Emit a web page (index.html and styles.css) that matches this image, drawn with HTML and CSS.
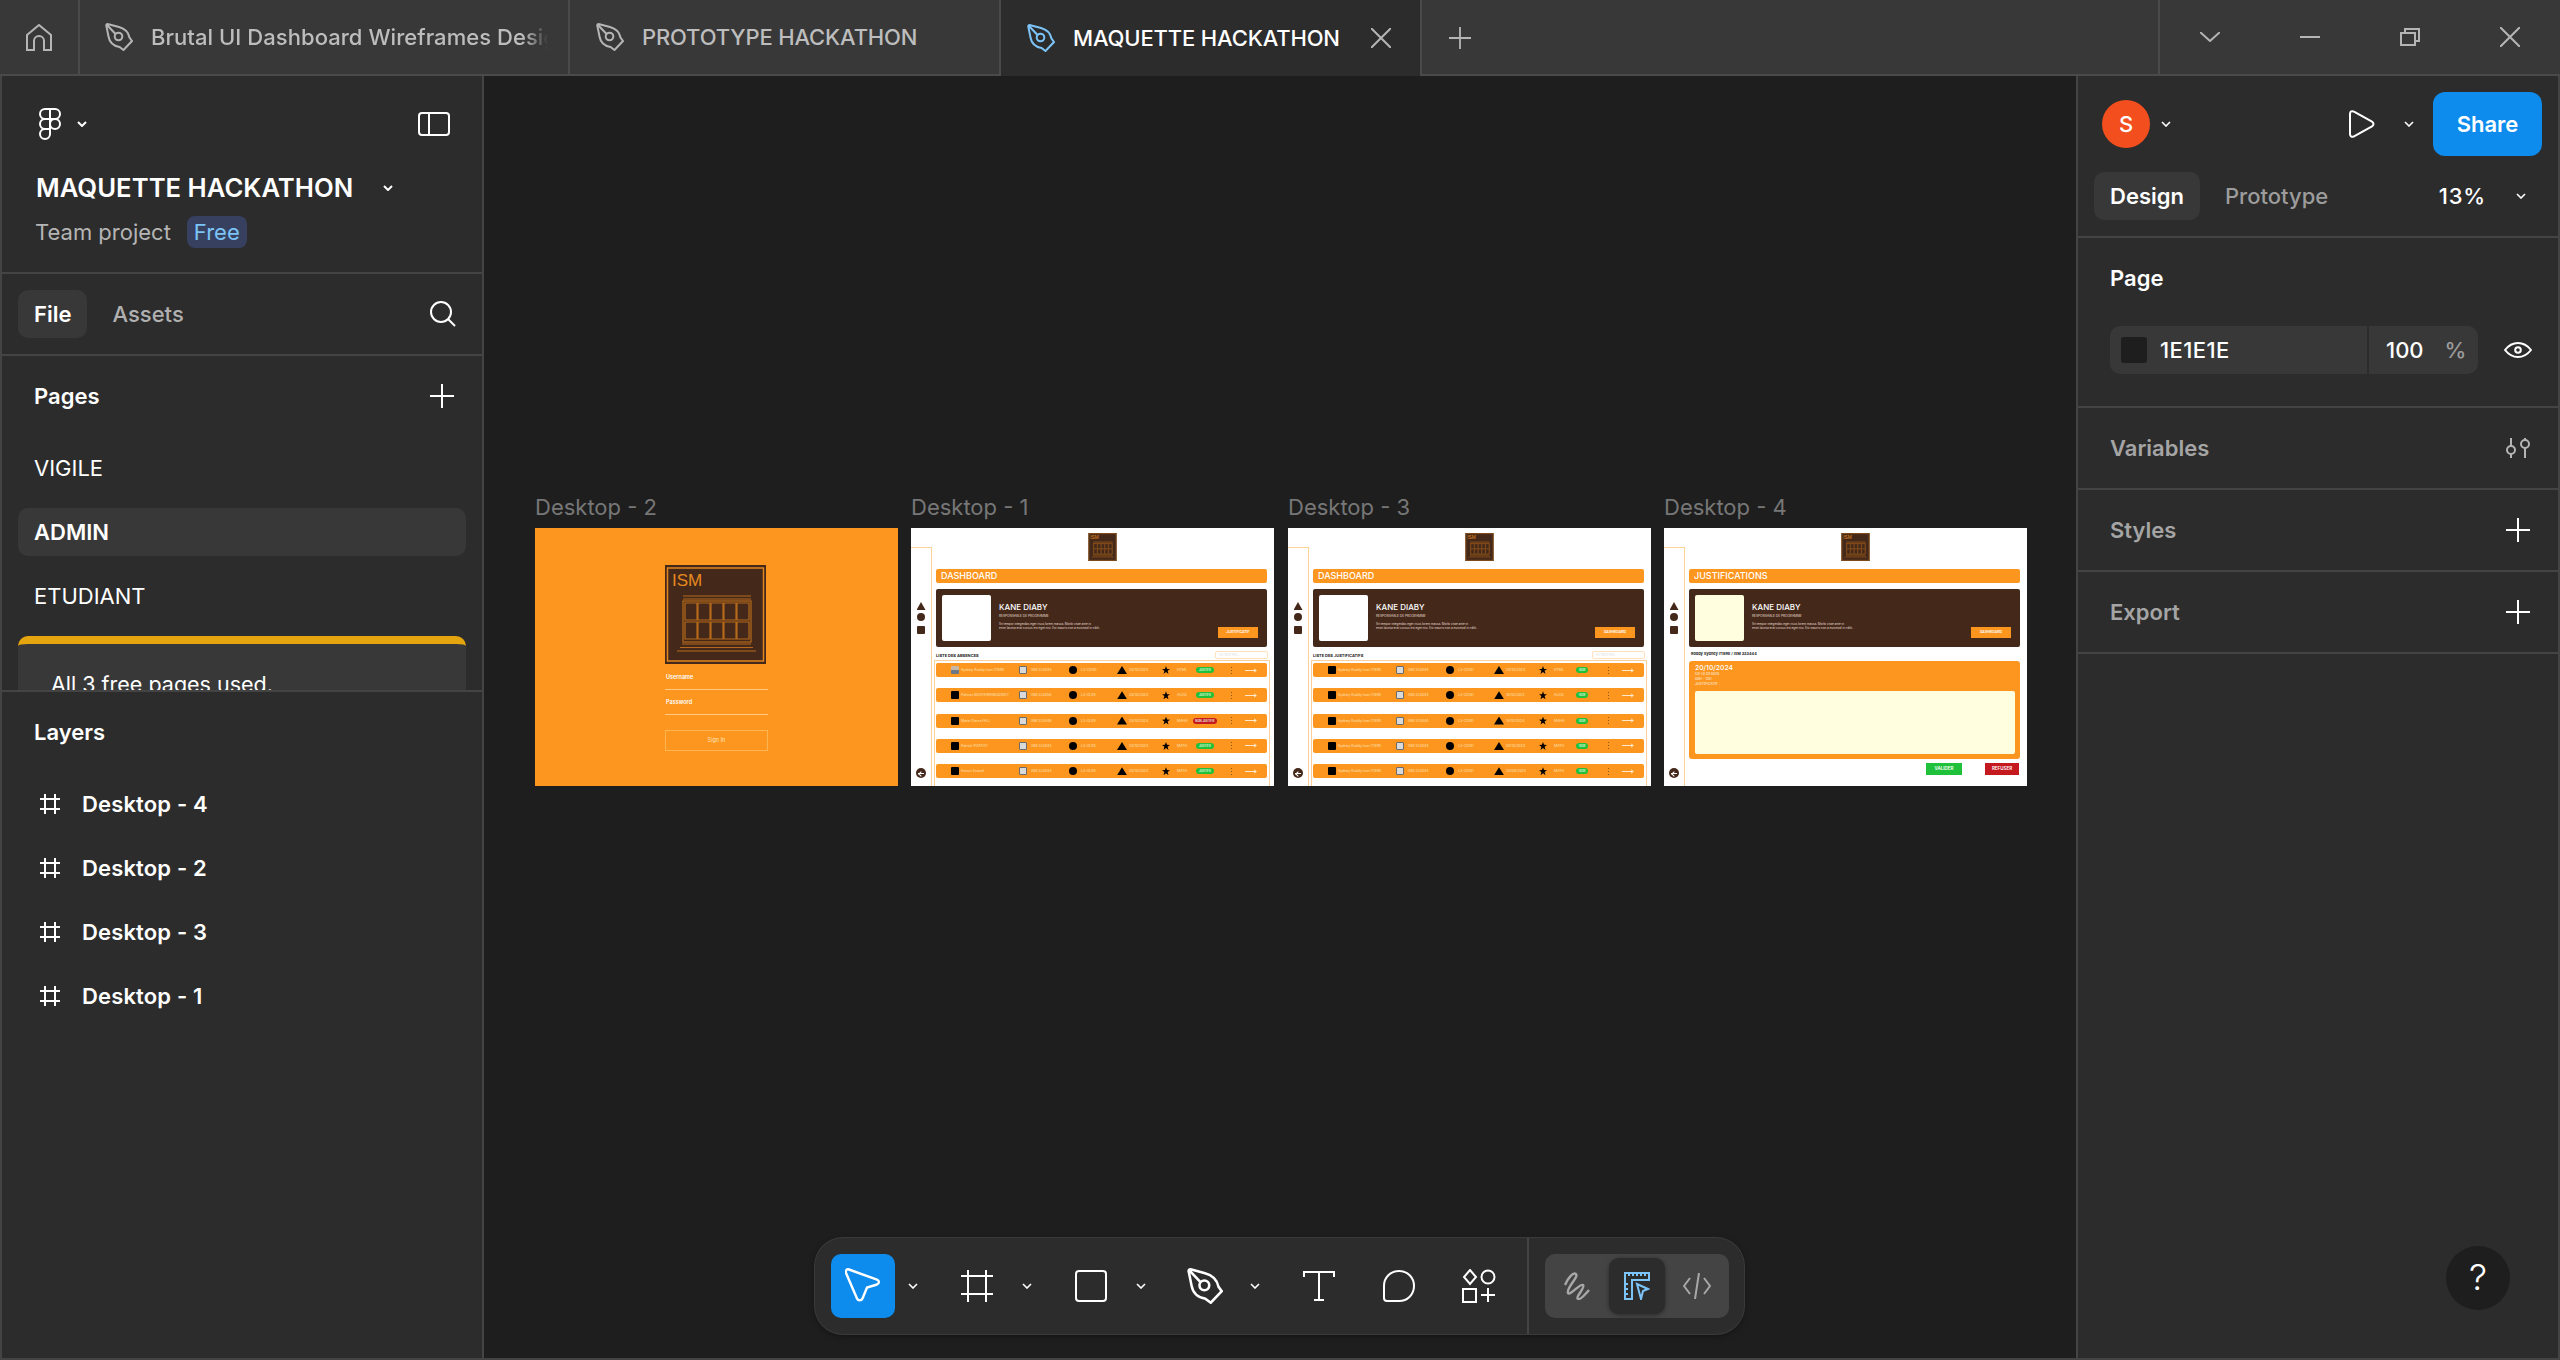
FILE: index.html
```html
<!DOCTYPE html>
<html>
<head>
  <title>MAQUETTE HACKATHON</title>
  <link rel="stylesheet" href="styles.css">
</head>
<body>
<svg class="sprites" width="0" height="0">
  <symbol id="pen" viewBox="0 0 28 28"><path d="M1.5 3.5C.8 1.5 1.7.7 3.5 1.2L14 4c6 1.6 9.5 5.500 10.500 10.500l2.500 3.500-8.500 9-4-3C9 23 4.500 19.500 3.500 13.500zM2 2l8.500 9"/><circle cx="13.500" cy="13.500" r="3.800"/></symbol>
  <symbol id="chev" viewBox="0 0 10 6"><path d="M1 1l4 4 4-4"/></symbol>
  <symbol id="plus" viewBox="0 0 24 24"><path d="M12 0v24M0 12h24"/></symbol>
  <symbol id="hash" viewBox="0 0 20 20"><path d="M5 0v20M15 0v20M0 5h20M0 15h20"/></symbol>
  <symbol id="logo" viewBox="0 0 101 99">
    <rect width="101" height="99" fill="#44291b"/>
    <rect x="2.500" y="3" width="96" height="93" fill="none" stroke="#e0851e" stroke-width="1.500"/>
    <text x="7" y="21" font-family="Liberation Sans" font-size="17" fill="#e8891e">ISM</text>
    <g fill="none" stroke="#b5691a" stroke-width="1.200">
      <path d="M18 31h68M18 34h68"/>
      <rect x="18" y="36" width="68" height="41"/>
      <path d="M20 38h12v17H20zM33 38h12v17H33zM46 38h12v17H46zM59 38h12v17H59zM72 38h12v17H72zM20 57h12v17H20zM33 57h12v17H33zM46 57h12v17H46zM59 57h12v17H59zM72 57h12v17H72z"/>
      <path d="M17 79h69M15 82.500h73M12 86h79"/>
    </g>
  </symbol>
</svg>

<div class="tabbar">
  <div class="tab-home">
    <svg class="ic stroke-gray" width="26" height="28" viewBox="0 0 26 28"><path d="M1 26V11L13 1l12 10v15h-7v-9a5 5 0 0 0-10 0v9z"/></svg>
  </div>
  <div class="tab tab-first">
    <svg class="ic stroke-gray" width="28" height="28"><use href="#pen"/></svg>
    <span class="tab-name fade">Brutal UI Dashboard Wireframes Design</span>
  </div>
  <div class="tab tab-second">
    <svg class="ic stroke-gray" width="28" height="28"><use href="#pen"/></svg>
    <span class="tab-name">PROTOTYPE HACKATHON</span>
  </div>
  <div class="tab tab-active">
    <svg class="ic stroke-blue" width="28" height="28"><use href="#pen"/></svg>
    <span class="tab-name">MAQUETTE HACKATHON</span>
    <svg class="ic stroke-gray tab-close" width="20" height="20" viewBox="0 0 20 20"><path d="M0 0l20 20M20 0L0 20"/></svg>
  </div>
  <div class="tab-add">
    <svg class="ic stroke-gray" width="22" height="22"><use href="#plus"/></svg>
  </div>
  <div class="win-btns">
    <div class="win-btn"><svg class="ic stroke-gray" width="20" height="10" viewBox="0 0 20 10"><path d="M0 0l10 9 10-9"/></svg></div>
    <div class="win-btn"><svg class="ic stroke-gray" width="20" height="2" viewBox="0 0 20 2"><path d="M0 1h20"/></svg></div>
    <div class="win-btn"><svg class="ic stroke-gray" width="20" height="18" viewBox="0 0 20 18"><path d="M1 5h14v12H1zM5 5V1h14v12h-4"/></svg></div>
    <div class="win-btn"><svg class="ic stroke-gray" width="20" height="20" viewBox="0 0 20 20"><path d="M0 0l20 20M20 0L0 20"/></svg></div>
  </div>
</div>

<div class="main">
  <div class="left-panel">
    <div class="file-head">
      <div class="file-tools">
        <svg class="ic stroke-white" width="24" height="32" viewBox="0 0 24 32"><path d="M12 1H7a5 5 0 0 0 0 10h5zM12 1h5a5 5 0 0 1 0 10h-5zM12 11H7a5 5 0 0 0 0 10h5zM12 21H7a5 5 0 1 0 5 5z"/><circle cx="17" cy="16" r="5"/></svg>
        <svg class="ic stroke-white chev logo-chev" width="10" height="6"><use href="#chev"/></svg>
        <svg class="ic stroke-white side-toggle" width="32" height="24" viewBox="0 0 32 24"><rect x="1" y="1" width="30" height="22" rx="3"/><path d="M11 1v22"/></svg>
      </div>
      <div class="file-title">
        <span>MAQUETTE HACKATHON</span>
        <svg class="ic stroke-white chev title-chev" width="10" height="6"><use href="#chev"/></svg>
      </div>
      <div class="file-sub">
        <span>Team project</span>
        <span class="free-pill">Free</span>
      </div>
    </div>

    <div class="file-tabs">
      <span class="pill-tab">File</span>
      <span class="plain-tab">Assets</span>
      <svg class="ic stroke-white search" width="26" height="26" viewBox="0 0 26 26"><circle cx="11" cy="11" r="10"/><path d="M18 18l7 7"/></svg>
    </div>

    <div class="pages">
      <div class="pages-head">
        <span>Pages</span>
        <svg class="ic stroke-white" width="24" height="24"><use href="#plus"/></svg>
      </div>
      <div class="page-row">VIGILE</div>
      <div class="page-row page-on">ADMIN</div>
      <div class="page-row">ETUDIANT</div>
      <div class="limit-note">All 3 free pages used.</div>
    </div>

    <div class="layers">
      <div class="layers-head">Layers</div>
      <div class="layer"><svg class="ic stroke-white" width="20" height="20"><use href="#hash"/></svg><span>Desktop - 4</span></div>
      <div class="layer"><svg class="ic stroke-white" width="20" height="20"><use href="#hash"/></svg><span>Desktop - 2</span></div>
      <div class="layer"><svg class="ic stroke-white" width="20" height="20"><use href="#hash"/></svg><span>Desktop - 3</span></div>
      <div class="layer"><svg class="ic stroke-white" width="20" height="20"><use href="#hash"/></svg><span>Desktop - 1</span></div>
    </div>
  </div>

  <div class="canvas">
    <!-- Desktop - 2 -->
    <div class="board board-d2">
      <div class="board-label">Desktop - 2</div>
      <div class="frame frame-login">
        <svg class="login-logo"><use href="#logo"/></svg>
        <div class="login-field">Username</div>
        <div class="login-field login-field-2">Password</div>
        <div class="login-btn">Sign In</div>
      </div>
    </div>

    <!-- Desktop - 1 -->
    <div class="board board-d1">
      <div class="board-label">Desktop - 1</div>
      <div class="frame">
        <div class="mini-side">
          <span class="mi-tri"></span><span class="mi-dot"></span><span class="mi-sq"></span>
          <span class="mi-back"></span>
        </div>
        <div class="mini-main">
          <svg class="mini-logo"><use href="#logo"/></svg>
          <div class="mini-title">DASHBOARD</div>
          <div class="mini-card">
            <div class="mini-photo"></div>
            <div class="mini-info">
              <div class="mini-name">KANE DIABY</div>
              <div class="mini-role">RESPONSABLE DE PROGRAMME</div>
              <div class="mini-text">Sit tempor integerdas eget risus lorem massa. Morbi vitae ante in<br>enim lacinia erat cursus est eget nisi. Est mauris non a euismod in nibh.</div>
            </div>
            <div class="mini-action">JUSTIFICATIF</div>
          </div>
          <div class="mini-listhead"><span>LISTE DES ABSENCES</span><span class="mini-filter">FILTRER PAR...</span></div>
          <div class="mini-list">
            <div class="mrow"><i class="m-ava m-photo"></i><b>Sydney Ruddy Ivan ITIERE</b><i class="m-sq"></i><b>ISM 333444</b><i class="m-dot"></i><b>L3-CDSD</b><i class="m-tri"></i><b>20/10/2024</b><i class="m-star"></i><b>HTML</b><em class="m-badge">JUSTIFIE</em><u class="m-more"></u><s class="m-arrow"></s></div>
            <div class="mrow"><i class="m-ava"></i><b>Paknas NGAYEWANKODIEET</b><i class="m-sq"></i><b>ISM 333456</b><i class="m-dot"></i><b>L3-GLRS</b><i class="m-tri"></i><b>20/10/2024</b><i class="m-star"></i><b>ALGO</b><em class="m-badge">JUSTIFIE</em><u class="m-more"></u><s class="m-arrow"></s></div>
            <div class="mrow"><i class="m-ava"></i><b>Marie Diarra FALL</b><i class="m-sq"></i><b>ISM 333449</b><i class="m-dot"></i><b>L3-GLRS</b><i class="m-tri"></i><b>20/10/2024</b><i class="m-star"></i><b>MAHA</b><em class="m-badge m-badge-no">NON JUSTIFIE</em><u class="m-more"></u><s class="m-arrow"></s></div>
            <div class="mrow"><i class="m-ava"></i><b>Patrick PGATHY</b><i class="m-sq"></i><b>ISM 333444</b><i class="m-dot"></i><b>L3-GLRS</b><i class="m-tri"></i><b>20/10/2024</b><i class="m-star"></i><b>MATH</b><em class="m-badge">JUSTIFIE</em><u class="m-more"></u><s class="m-arrow"></s></div>
            <div class="mrow"><i class="m-ava"></i><b>Amour Evaroil</b><i class="m-sq"></i><b>ISM 333444</b><i class="m-dot"></i><b>L3-GLRS</b><i class="m-tri"></i><b>20/10/2024</b><i class="m-star"></i><b>MATH</b><em class="m-badge">JUSTIFIE</em><u class="m-more"></u><s class="m-arrow"></s></div>
          </div>
        </div>
      </div>
    </div>

    <!-- Desktop - 3 -->
    <div class="board board-d3">
      <div class="board-label">Desktop - 3</div>
      <div class="frame">
        <div class="mini-side">
          <span class="mi-tri"></span><span class="mi-dot"></span><span class="mi-sq"></span>
          <span class="mi-back"></span>
        </div>
        <div class="mini-main">
          <svg class="mini-logo"><use href="#logo"/></svg>
          <div class="mini-title">DASHBOARD</div>
          <div class="mini-card">
            <div class="mini-photo"></div>
            <div class="mini-info">
              <div class="mini-name">KANE DIABY</div>
              <div class="mini-role">RESPONSABLE DE PROGRAMME</div>
              <div class="mini-text">Sit tempor integerdas eget risus lorem massa. Morbi vitae ante in<br>enim lacinia erat cursus est eget nisi. Est mauris non a euismod in nibh.</div>
            </div>
            <div class="mini-action">DASHBOARD</div>
          </div>
          <div class="mini-listhead"><span>LISTE DES JUSTIFICATIFS</span><span class="mini-filter">FILTRER PAR...</span></div>
          <div class="mini-list">
            <div class="mrow"><i class="m-ava"></i><b>Sydney Ruddy Ivan ITIERE</b><i class="m-sq"></i><b>ISM 333444</b><i class="m-dot"></i><b>L3-CDSD</b><i class="m-tri"></i><b>20/10/2024</b><i class="m-star"></i><b>HTML</b><em class="m-badge m-badge-see">VOIR</em><u class="m-more"></u><s class="m-arrow"></s></div>
            <div class="mrow"><i class="m-ava"></i><b>Sydney Ruddy Ivan ITIERE</b><i class="m-sq"></i><b>ISM 333444</b><i class="m-dot"></i><b>L3-CDSD</b><i class="m-tri"></i><b>18/10/2024</b><i class="m-star"></i><b>ALGO</b><em class="m-badge m-badge-see">VOIR</em><u class="m-more"></u><s class="m-arrow"></s></div>
            <div class="mrow"><i class="m-ava"></i><b>Sydney Ruddy Ivan ITIERE</b><i class="m-sq"></i><b>ISM 333444</b><i class="m-dot"></i><b>L3-CDSD</b><i class="m-tri"></i><b>15/10/2024</b><i class="m-star"></i><b>MAHA</b><em class="m-badge m-badge-see">VOIR</em><u class="m-more"></u><s class="m-arrow"></s></div>
            <div class="mrow"><i class="m-ava"></i><b>Sydney Ruddy Ivan ITIERE</b><i class="m-sq"></i><b>ISM 333444</b><i class="m-dot"></i><b>L3-CDSD</b><i class="m-tri"></i><b>05/10/2024</b><i class="m-star"></i><b>MATH</b><em class="m-badge m-badge-see">VOIR</em><u class="m-more"></u><s class="m-arrow"></s></div>
            <div class="mrow"><i class="m-ava"></i><b>Sydney Ruddy Ivan ITIERE</b><i class="m-sq"></i><b>ISM 333444</b><i class="m-dot"></i><b>L3-CDSD</b><i class="m-tri"></i><b>20/09/2024</b><i class="m-star"></i><b>MATH</b><em class="m-badge m-badge-see">VOIR</em><u class="m-more"></u><s class="m-arrow"></s></div>
          </div>
        </div>
      </div>
    </div>

    <!-- Desktop - 4 -->
    <div class="board board-d4">
      <div class="board-label">Desktop - 4</div>
      <div class="frame">
        <div class="mini-side">
          <span class="mi-tri"></span><span class="mi-dot"></span><span class="mi-sq"></span>
          <span class="mi-back"></span>
        </div>
        <div class="mini-main">
          <svg class="mini-logo"><use href="#logo"/></svg>
          <div class="mini-title">JUSTIFICATIONS</div>
          <div class="mini-card">
            <div class="mini-photo mini-photo-pale"></div>
            <div class="mini-info">
              <div class="mini-name">KANE DIABY</div>
              <div class="mini-role">RESPONSABLE DE PROGRAMME</div>
              <div class="mini-text">Sit tempor integerdas eget risus lorem massa. Morbi vitae ante in<br>enim lacinia erat cursus est eget nisi. Est mauris non a euismod in nibh.</div>
            </div>
            <div class="mini-action">DASHBOARD</div>
          </div>
          <div class="just-who">Roddy Sydney ITIERE / ISM 333444</div>
          <div class="just-box">
            <div class="just-date">20/10/2024</div>
            <div class="just-line">UX-UI DESIGN</div>
            <div class="just-line">08H - 12H</div>
            <div class="just-line">JUSTIFICATIF :</div>
            <div class="just-area"></div>
          </div>
          <div class="just-btns">
            <span class="just-btn just-ok">VALIDER</span>
            <span class="just-btn just-no">REFUSER</span>
          </div>
        </div>
      </div>
    </div>

    <div class="toolbar">
      <div class="tool tool-on"><svg class="ic stroke-white sw3" width="36" height="36" viewBox="0 0 36 36"><path d="M4 1.500l28 10c2.500 1 2.500 4 0 5l-10 3-4.500 11c-1 2.500-4.500 2.500-5.500 0L1 5C0.300 2.500 1.800.800 4 1.500z"/></svg></div>
      <div class="tool-chev"><svg class="ic stroke-white chev sw2" width="10" height="6"><use href="#chev"/></svg></div>
      <div class="tool tool-gap"><svg class="ic stroke-white" width="32" height="32" viewBox="0 0 32 32"><path d="M7 0v32M25 0v32M0 6h32M0 24h32"/></svg></div>
      <div class="tool-chev"><svg class="ic stroke-white chev sw2" width="10" height="6"><use href="#chev"/></svg></div>
      <div class="tool tool-gap"><svg class="ic stroke-white" width="32" height="32" viewBox="0 0 32 32"><rect x="1" y="1" width="30" height="30" rx="3"/></svg></div>
      <div class="tool-chev"><svg class="ic stroke-white chev sw2" width="10" height="6"><use href="#chev"/></svg></div>
      <div class="tool tool-gap"><svg class="ic stroke-white" width="36" height="36"><use href="#pen"/></svg></div>
      <div class="tool-chev"><svg class="ic stroke-white chev sw2" width="10" height="6"><use href="#chev"/></svg></div>
      <div class="tool tool-gap"><svg class="ic stroke-white" width="32" height="30" viewBox="0 0 32 30"><path d="M1 6V1h30v5M16 1v28M11 29h10"/></svg></div>
      <div class="tool tool-gap2"><svg class="ic stroke-white" width="32" height="32" viewBox="0 0 32 32"><path d="M16 1c8.500 0 15 6.500 15 15s-6.500 15-15 15H4c-2 0-3-1-3-3V16C1 7.500 7.500 1 16 1z"/></svg></div>
      <div class="tool tool-gap2"><svg class="ic stroke-white" width="34" height="34" viewBox="0 0 34 34"><path d="M8 1l6 7-6 7-6-7zM1 20h13v13H1zM26 19v14M19 26h14"/><circle cx="26" cy="8" r="6.500"/></svg></div>
      <div class="tool-divider"></div>
      <div class="modes">
        <div class="mode"><svg class="ic stroke-mode sw3" width="28" height="28" viewBox="0 0 28 28"><path d="M2 13C5 6 10 0 13 2c3 3-10 14-8 19 2 3 12-10 15-8 3 2-8 12-5 14 2 1 6-3 11-9"/></svg></div>
        <div class="mode mode-on"><svg class="ic stroke-blue" width="26" height="28" viewBox="0 0 26 28"><path d="M1 1h24v7H8v19H1zM5 1v3M9 1v3M13 1v3M17 1v3M21 1v3M1 12h3M1 17h3M1 22h3"/><path d="M13 12l11 5-5 2-2 8z"/></svg></div>
        <div class="mode"><svg class="ic stroke-mode" width="28" height="26" viewBox="0 0 28 26"><path d="M7 5l-6 8 6 8M21 5l6 8-6 8M16 0l-4 26"/></svg></div>
      </div>
    </div>
  </div>

  <div class="right-panel">
    <div class="rp-top">
      <span class="avatar">S</span>
      <svg class="ic stroke-white chev sw2 avatar-chev" width="10" height="6"><use href="#chev"/></svg>
      <svg class="ic stroke-white play" width="26" height="28" viewBox="0 0 26 28"><path d="M1 4c0-2.500 2-3.500 4-2.300l18 10c2 1.200 2 3.400 0 4.600l-18 10C3 27.500 1 26.500 1 24z"/></svg>
      <svg class="ic stroke-white chev sw2 play-chev" width="10" height="6"><use href="#chev"/></svg>
      <span class="share">Share</span>
    </div>
    <div class="rp-tabs">
      <span class="design-tab">Design</span>
      <span class="proto-tab">Prototype</span>
      <span class="zoom-val">13%</span>
      <svg class="ic stroke-white chev sw2 zoom-chev" width="10" height="6"><use href="#chev"/></svg>
    </div>
    <div class="rp-page">
      <div class="rp-title">Page</div>
      <div class="rp-field-row">
        <div class="rp-field">
          <span class="swatch"></span>
          <span class="hex">1E1E1E</span>
          <span class="opacity">100</span>
          <span class="percent">%</span>
        </div>
        <svg class="ic stroke-white eye" width="28" height="16" viewBox="0 0 28 16"><path d="M1 8c3.500-4.500 8-7 13-7s9.500 2.500 13 7c-3.500 4.500-8 7-13 7S4.500 12.500 1 8z"/><circle cx="14" cy="8" r="2.800"/></svg>
      </div>
    </div>
    <div class="rp-section">
      <span>Variables</span>
      <svg class="ic stroke-gray" width="24" height="20" viewBox="0 0 24 20"><circle cx="5" cy="12" r="4"/><circle cx="19" cy="6" r="4"/><path d="M5 0v8M5 16v4M19 0v2M19 10v10"/></svg>
    </div>
    <div class="rp-section">
      <span>Styles</span>
      <svg class="ic stroke-white" width="24" height="24"><use href="#plus"/></svg>
    </div>
    <div class="rp-section">
      <span>Export</span>
      <svg class="ic stroke-white" width="24" height="24"><use href="#plus"/></svg>
    </div>
    <div class="help">?</div>
  </div>
</div>
</body>
</html>
```

FILE: styles.css
```css
* {
  box-sizing: border-box;
}
body {
  margin: 0;
  width: 2560px;
  height: 1360px;
  overflow: hidden;
  background: #1e1e1e;
  font-family: Inter, "Noto Sans", sans-serif;
  font-size: 22px;
  color: #fff;
}
.sprites {
  position: absolute;
}
.ic {
  fill: none;
  stroke-width: 2;
  flex-shrink: 0;
  display: block;
}
.stroke-white { stroke: #fff; }
.stroke-gray { stroke: #b5b5b5; }
.stroke-blue { stroke: #7cc4f8; }
.stroke-mode { stroke: #a8a8a8; }
.sw2 { stroke-width: 1.6; }
.sw3 { stroke-width: 2.4; }

/* tab bar */
.tabbar {
  display: flex;
  height: 76px;
  background: #383838;
  border-bottom: 2px solid #4a4a4a;
}
.tab-home {
  width: 80px;
  border-right: 2px solid #4a4a4a;
  padding: 24px 0 0 26px;
}
.tab {
  display: flex;
  align-items: center;
  padding-left: 25px;
  border-right: 2px solid #4a4a4a;
  color: #bdbdbd;
  font-weight: 500;
  gap: 18px;
  white-space: nowrap;
  overflow: hidden;
}
.tab-first { width: 490px; }
.tab-second { width: 431px; padding-left: 26px; }
.tab-active {
  width: 421px;
  padding-left: 26px;
  height: 76px;
  background: #2c2c2c;
  color: #fff;
}
.tab-name {
  display: block;
  letter-spacing: -.15px;
}
.fade {
  width: 397px;
  overflow: hidden;
  letter-spacing: .05px;
  -webkit-mask-image: linear-gradient(to right, #000 94%, transparent);
}
.tab-close {
  margin-left: 13px;
}
.tab-add {
  padding: 27px 0 0 27px;
  flex: 1;
}
.win-btns {
  display: flex;
  width: 402px;
  border-left: 2px solid #4a4a4a;
}
.win-btn {
  width: 100px;
  height: 74px;
  display: flex;
  align-items: center;
  justify-content: center;
}

/* layout */
.main {
  display: flex;
  height: 1284px;
  border-left: 2px solid #444;
  border-right: 2px solid #444;
  border-bottom: 2px solid #444;
}
.left-panel {
  width: 482px;
  background: #2c2c2c;
  border-right: 2px solid #444;
  display: flex;
  flex-direction: column;
}
.canvas {
  width: 1592px;
  position: relative;
  background: #1e1e1e;
}
.right-panel {
  width: 482px;
  background: #2c2c2c;
  border-left: 2px solid #444;
  position: relative;
}

/* left panel */
.file-head {
  height: 198px;
  padding: 32px 32px 0 34px;
  border-bottom: 2px solid #444;
}
.file-tools {
  display: flex;
  align-items: center;
  margin-left: 2px;
}
.logo-chev {
  margin-left: 15px;
}
.side-toggle {
  margin-left: auto;
}
.file-title {
  display: flex;
  align-items: center;
  margin-top: 32px;
  font-size: 25.700px;
  font-weight: 600;
}
.title-chev {
  margin-left: 30px;
}
.file-sub {
  display: flex;
  align-items: center;
  margin-top: 13px;
  margin-left: -1px;
  color: #b5b5b5;
}
.free-pill {
  margin-left: 16px;
  padding: 0 7px;
  height: 32px;
  line-height: 32px;
  border-radius: 8px;
  background: #37415f;
  color: #7cc4f8;
}
.file-tabs {
  height: 82px;
  display: flex;
  align-items: center;
  padding: 0 26px 0 16px;
  border-bottom: 2px solid #444;
}
.pill-tab {
  padding: 0 16px;
  height: 48px;
  line-height: 48px;
  border-radius: 10px;
  background: #383838;
  font-weight: 600;
}
.plain-tab {
  margin-left: 25px;
  color: #b0b0b0;
  font-weight: 500;
}
.search {
  margin-left: auto;
}
.pages {
  height: 336px;
  padding: 0 16px;
  border-bottom: 2px solid #444;
  overflow: hidden;
}
.pages-head {
  display: flex;
  align-items: center;
  justify-content: space-between;
  height: 79px;
  padding: 0 12px 0 16px;
  font-weight: 600;
}
.page-row {
  height: 48px;
  line-height: 48px;
  margin: 9px 0 16px;
  padding-left: 16px;
  border-radius: 10px;
}
.page-row + .page-row {
  margin-top: 0;
}
.page-on {
  background: #383838;
  font-weight: 600;
}
.limit-note {
  height: 80px;
  padding: 27px 0 0 33px;
  background: #383838;
  border-top: 8px solid #e5a50f;
  border-radius: 10px 10px 0 0;
  font-size: 21.500px;
}
.layers-head {
  height: 80px;
  line-height: 80px;
  padding-left: 32px;
  font-weight: 600;
}
.layer {
  display: flex;
  align-items: center;
  height: 64px;
  padding-left: 38px;
  gap: 22px;
  font-weight: 600;
  letter-spacing: .15px;
}

/* boards on the canvas */
.board {
  position: absolute;
  top: 416px;
  width: 363px;
}
.board-d2 { left: 51px; }
.board-d1 { left: 427px; }
.board-d3 { left: 804px; }
.board-d4 { left: 1180px; }
.board-label {
  height: 30px;
  line-height: 30px;
  margin-bottom: 6px;
  color: #777;
}
.frame {
  display: flex;
  height: 258px;
  overflow: hidden;
  background: #fff;
}
.frame-login {
  flex-direction: column;
  align-items: center;
  padding: 37px 0 0 0;
  background: #fc961f;
}
.login-logo {
  width: 101px;
  height: 99px;
  margin-left: -3px;
}
.login-field {
  width: 103px;
  height: 24px;
  margin-top: 2px;
  padding: 8px 0 0 1px;
  font-size: 5.500px;
  font-weight: 600;
  border-bottom: 1px solid #ffc983;
}
.login-field-2 {
  margin-top: 1px;
}
.login-btn {
  width: 103px;
  height: 21px;
  margin-top: 15px;
  border: 1px solid #ffb552;
  text-align: center;
  line-height: 19px;
  font-size: 5.500px;
  color: #ffe3bd;
}

.mini-side {
  width: 21px;
  height: 239px;
  margin-top: 19px;
  flex-shrink: 0;
  display: flex;
  flex-direction: column;
  align-items: center;
  padding: 54px 0 0;
  border-top: 1px solid #fdd09a;
  border-right: 1px solid #fdd09a;
}
.mi-tri {
  width: 9px;
  height: 8px;
  background: #44291b;
  clip-path: polygon(50% 0, 100% 100%, 0 100%);
}
.mi-dot {
  width: 8px;
  height: 8px;
  margin-top: 3px;
  border-radius: 50%;
  background: #44291b;
}
.mi-sq {
  width: 8px;
  height: 8px;
  margin-top: 5px;
  border-radius: 1px;
  background: #44291b;
}
.mi-back {
  position: relative;
  width: 10px;
  height: 10px;
  margin-top: 134px;
  border-radius: 50%;
  background: #44291b;
}
.mi-back::after {
  content: "";
  position: absolute;
  left: 2px;
  top: 4.500px;
  width: 6px;
  height: 1px;
  background: #fff;
}
.mi-back::before {
  content: "";
  position: absolute;
  left: 2.500px;
  top: 3.500px;
  width: 3px;
  height: 3px;
  border-left: 1px solid #fff;
  border-bottom: 1px solid #fff;
  transform: rotate(45deg);
}
.mini-main {
  flex: 1;
  min-width: 0;
  padding: 5px 7px 0 4px;
  display: flex;
  flex-direction: column;
}
.mini-logo {
  width: 29px;
  height: 28px;
  margin-left: 152px;
  flex-shrink: 0;
}
.mini-title {
  height: 14px;
  line-height: 14px;
  margin-top: 8px;
  padding-left: 5px;
  background: #fc961f;
  border-radius: 2px;
  font-size: 9px;
  font-weight: 500;
  flex-shrink: 0;
}
.mini-card {
  display: flex;
  height: 58px;
  margin-top: 6px;
  padding: 6px 9px 0 6px;
  background: #44291b;
  border-radius: 2px;
  flex-shrink: 0;
}
.mini-photo {
  width: 49px;
  height: 46px;
  background: #fff;
  border-radius: 2px;
}
.mini-photo-pale {
  background: #ffffdf;
}
.mini-info {
  margin-left: 8px;
  padding-top: 8px;
  flex: 1;
}
.mini-name {
  font-size: 8px;
  font-weight: 500;
  line-height: 9px;
}
.mini-role {
  margin-top: 2px;
  font-size: 3.200px;
  line-height: 5px;
  color: #e8dcd2;
}
.mini-text {
  margin-top: 3px;
  font-size: 3px;
  line-height: 4px;
  color: #e8dcd2;
}
.mini-action {
  width: 40px;
  height: 11px;
  margin-top: 32px;
  line-height: 11px;
  background: #fc961f;
  font-size: 3.500px;
  font-weight: 600;
  text-align: center;
}
.mini-listhead {
  display: flex;
  align-items: center;
  justify-content: space-between;
  height: 8px;
  margin: 4px -1px 0 0;
  color: #222;
  font-size: 4px;
  font-weight: 700;
  flex-shrink: 0;
}
.mini-filter {
  width: 53px;
  height: 8px;
  line-height: 7px;
  padding-left: 3px;
  border: 1px solid #ffe1bc;
  border-radius: 2px;
  font-size: 3px;
  font-weight: 400;
  color: #ddd;
}
.mini-list {
  display: flex;
  flex-direction: column;
  gap: 11.300px;
  height: 130px;
  margin: 1px -3px 0 -2px;
  padding: 2px 2px 0 1px;
  border: 1px solid #fdd09a;
  flex-shrink: 0;
}
.mrow {
  display: grid;
  grid-template-columns: 10px 58px 12px 38px 12px 36px 12px 33px 15px 15px 26px 27px 12px;
  align-items: center;
  height: 14px;
  padding-left: 15px;
  background: #fc961f;
  border-radius: 2px;
  flex-shrink: 0;
  overflow: hidden;
}
.mrow b {
  font-size: 3.500px;
  font-weight: 400;
  color: #ffe3bd;
  white-space: nowrap;
}
.m-ava {
  display: block;
  width: 8px;
  height: 8px;
  background: #000;
  border-radius: 1px;
}
.m-photo {
  background: linear-gradient(#c8b6a6 45%, #6d7885 45%);
}
.m-sq {
  display: block;
  width: 8px;
  height: 8px;
  background: #d9d9d9;
  border: 1px solid #6b6b6b;
  border-radius: 1px;
}
.m-dot {
  display: block;
  width: 8px;
  height: 8px;
  border-radius: 50%;
  background: #000;
}
.m-tri {
  display: block;
  width: 10px;
  height: 8px;
  background: #000;
  clip-path: polygon(50% 0, 100% 100%, 0 100%);
}
.m-star {
  display: block;
  width: 8px;
  height: 8px;
  background: #000;
  clip-path: polygon(50% 0, 63% 36%, 100% 38%, 70% 60%, 81% 100%, 50% 76%, 19% 100%, 30% 60%, 0 38%, 37% 36%);
}
.m-badge {
  justify-self: center;
  height: 6px;
  line-height: 6px;
  padding: 0 3px;
  border-radius: 3px;
  background: #1fc13a;
  color: #eafbe9;
  font-size: 2.800px;
  font-style: normal;
  font-weight: 600;
  white-space: nowrap;
}
.m-badge-no {
  background: #c4191f;
  padding: 0 2px;
}
.m-badge-see {
  padding: 0 3px;
}
.m-more {
  display: block;
  justify-self: center;
  width: 1px;
  height: 7px;
  background: repeating-linear-gradient(#8a5a20 0 1px, transparent 1px 3px);
}
.m-arrow {
  display: block;
  position: relative;
  width: 11px;
  height: 1px;
  background: #ffe9cc;
}
.m-arrow::after {
  content: "";
  position: absolute;
  right: 0;
  top: -1px;
  width: 2px;
  height: 2px;
  border-top: 1px solid #ffe9cc;
  border-right: 1px solid #ffe9cc;
  transform: rotate(45deg);
}

/* desktop 4 */
.just-who {
  margin: 3px 0 0 2px;
  height: 8px;
  line-height: 8px;
  color: #222;
  font-size: 3.800px;
  font-weight: 700;
  flex-shrink: 0;
}
.just-box {
  height: 98px;
  margin-top: 3px;
  padding: 2px 5px 0 6px;
  background: #fc961f;
  border-radius: 3px;
  flex-shrink: 0;
}
.just-date {
  font-size: 6.800px;
  line-height: 9px;
  font-weight: 500;
}
.just-line {
  font-size: 3.500px;
  line-height: 5px;
  color: #fff4e3;
}
.just-area {
  height: 63px;
  margin-top: 4px;
  background: #ffffdf;
  border-radius: 2px;
}
.just-btns {
  display: flex;
  justify-content: flex-end;
  gap: 23px;
  margin: 4px 1px 0 0;
}
.just-btn {
  height: 12px;
  line-height: 12px;
  text-align: center;
  font-size: 4.500px;
  font-weight: 600;
}
.just-ok {
  width: 36px;
  background: #1fc13a;
}
.just-no {
  width: 34px;
  background: #c4191f;
}

/* bottom toolbar */
.toolbar {
  position: absolute;
  left: 331px;
  top: 1162px;
  width: 929px;
  height: 96px;
  display: flex;
  align-items: center;
  padding-left: 16px;
  background: #2c2c2c;
  border-radius: 28px;
  box-shadow: 0 0 0 1px #3a3a3a, 0 2px 6px rgba(0, 0, 0, .4);
}
.tool {
  width: 64px;
  height: 64px;
  display: flex;
  align-items: center;
  justify-content: center;
  border-radius: 10px;
}
.tool-on {
  background: #0d8ced;
}
.tool-gap { margin-left: 14px; }
.tool-gap2 { margin-left: 16px; }
.tool-chev {
  width: 36px;
  display: flex;
  justify-content: center;
}
.tool-divider {
  width: 2px;
  height: 96px;
  margin-left: 16px;
  background: #444;
}
.modes {
  display: flex;
  align-items: center;
  width: 184px;
  height: 64px;
  margin-left: 16px;
  background: #444;
  border-radius: 10px;
}
.mode {
  flex: 1;
  display: flex;
  align-items: center;
  justify-content: center;
}
.mode-on {
  flex: 0 0 56px;
  height: 56px;
  background: #2c2c2c;
  border-radius: 10px;
  box-shadow: 0 1px 4px rgba(0, 0, 0, .4);
}

/* right panel */
.rp-top {
  display: flex;
  align-items: center;
  height: 64px;
  margin-top: 16px;
  padding: 0 16px 0 24px;
}
.avatar {
  width: 48px;
  height: 48px;
  line-height: 48px;
  border-radius: 50%;
  background: #f24e1e;
  text-align: center;
  font-weight: 500;
}
.avatar-chev {
  margin-left: 11px;
}
.play {
  margin-left: auto;
  position: relative;
  left: 1px;
}
.play-chev {
  margin-left: 30px;
}
.share {
  width: 109px;
  height: 64px;
  line-height: 64px;
  margin-left: 19px;
  border-radius: 12px;
  background: #0d8ced;
  text-align: center;
  font-weight: 600;
}
.rp-tabs {
  display: flex;
  align-items: center;
  height: 82px;
  padding: 16px 32px 16px 16px;
  border-bottom: 2px solid #444;
}
.design-tab {
  width: 106px;
  height: 48px;
  line-height: 48px;
  border-radius: 10px;
  background: #383838;
  text-align: center;
  font-weight: 600;
}
.proto-tab {
  margin-left: 25px;
  color: #9c9c9c;
  font-weight: 500;
}
.zoom-val {
  margin-left: auto;
  font-weight: 500;
  letter-spacing: .8px;
}
.zoom-chev {
  margin-left: 30px;
}
.rp-page {
  height: 170px;
  padding: 27px 0 0 32px;
  border-bottom: 2px solid #444;
}
.rp-title {
  height: 26px;
  line-height: 26px;
  font-weight: 600;
}
.rp-field-row {
  display: flex;
  align-items: center;
  margin-top: 35px;
}
.rp-field {
  display: flex;
  align-items: center;
  width: 368px;
  height: 48px;
  border-radius: 10px;
  background: #383838;
  font-weight: 500;
}
.swatch {
  width: 26px;
  height: 26px;
  margin-left: 11px;
  border-radius: 3px;
  background: #1e1e1e;
}
.hex {
  width: 209px;
  height: 48px;
  line-height: 48px;
  margin-left: 13px;
  border-right: 2px solid #2c2c2c;
  letter-spacing: .4px;
}
.opacity {
  margin-left: 17px;
}
.percent {
  margin-left: 21px;
  color: #9c9c9c;
}
.eye {
  margin-left: 26px;
}
.rp-section {
  display: flex;
  align-items: center;
  justify-content: space-between;
  height: 82px;
  padding: 0 28px 0 32px;
  border-bottom: 2px solid #444;
  color: #a5a5a5;
  font-weight: 600;
}
.help {
  position: absolute;
  right: 48px;
  bottom: 48px;
  width: 64px;
  height: 64px;
  line-height: 62px;
  border-radius: 50%;
  background: #1e1e1e;
  text-align: center;
  font-size: 36px;
  font-weight: 300;
}
```
